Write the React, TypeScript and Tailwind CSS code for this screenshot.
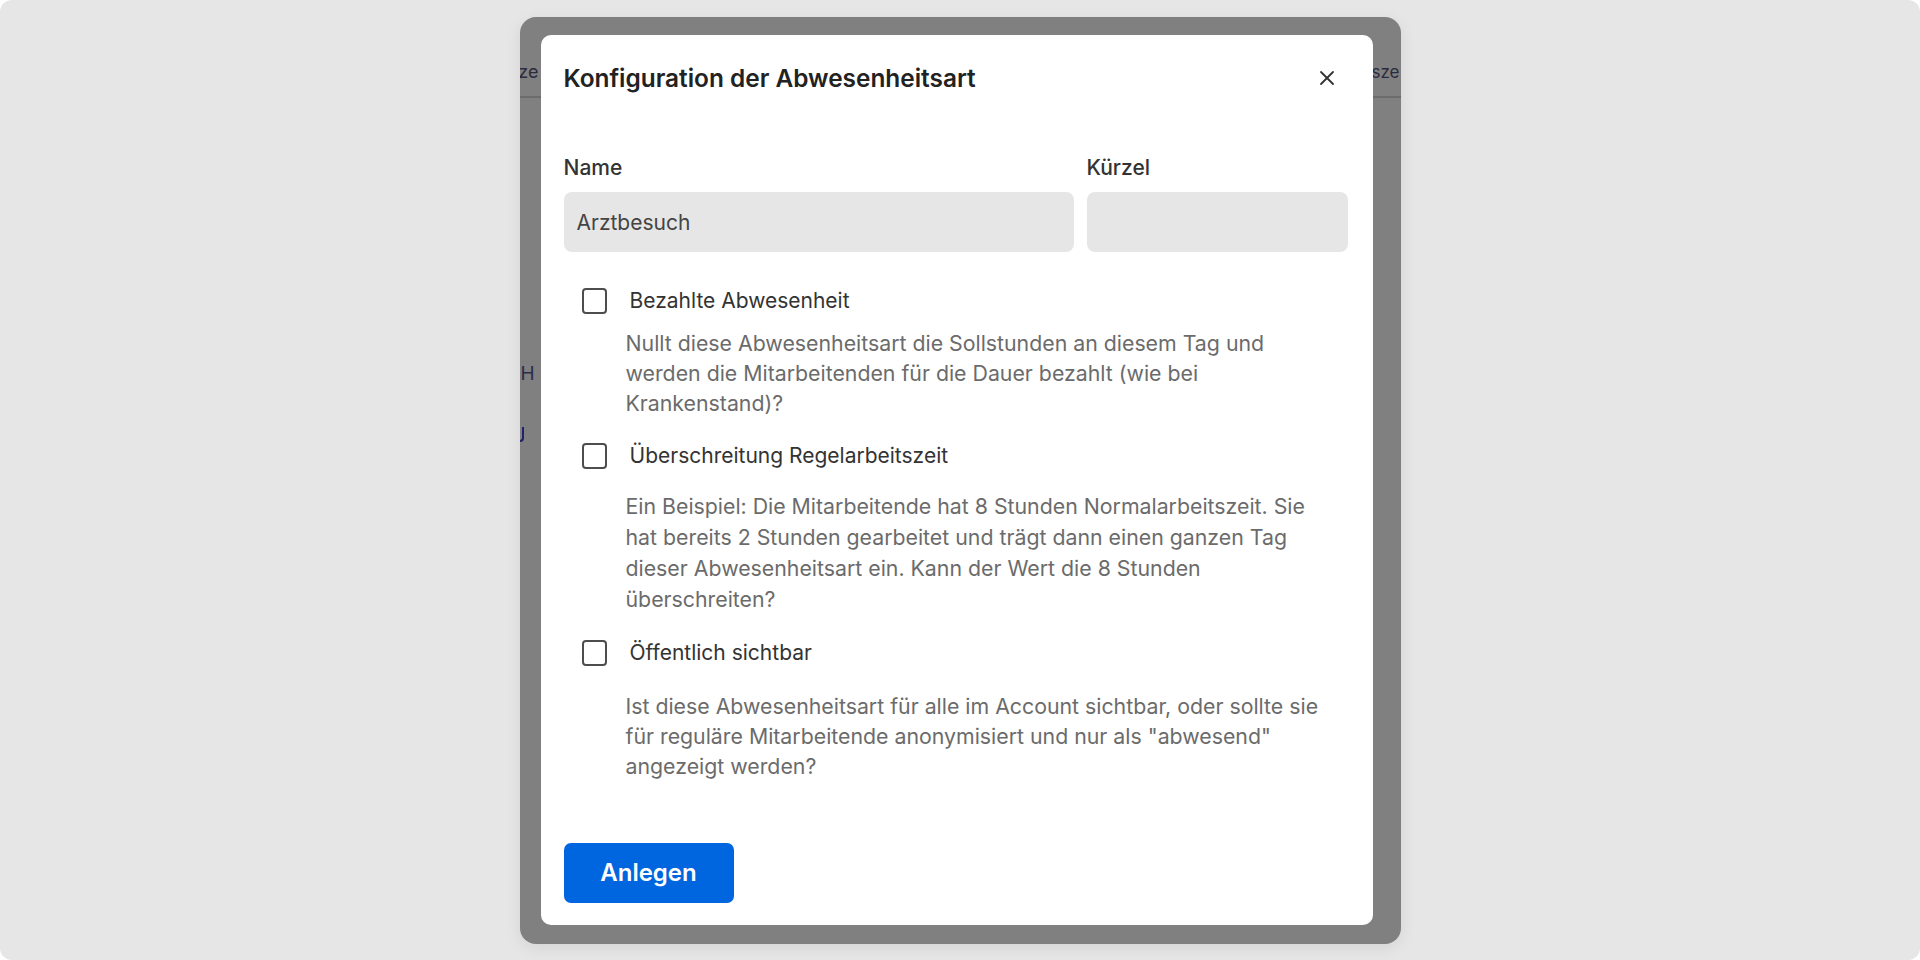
import { X } from "lucide-react"

const options = [
  {
    label: "Bezahlte Abwesenheit",
    text: "Nullt diese Abwesenheitsart die Sollstunden an diesem Tag und werden die Mitarbeitenden für die Dauer bezahlt (wie bei Krankenstand)?",
    rowGap: "mt-[34px]",
    textGap: "mt-[12px]",
    leading: "leading-[30px]",
  },
  {
    label: "Überschreitung Regelarbeitszeit",
    text: "Ein Beispiel: Die Mitarbeitende hat 8 Stunden Normalarbeitszeit. Sie hat bereits 2 Stunden gearbeitet und trägt dann einen ganzen Tag dieser Abwesenheitsart ein. Kann der Wert die 8 Stunden überschreiten?",
    rowGap: "mt-[23px]",
    textGap: "mt-[20px]",
    leading: "leading-[31px]",
  },
  {
    label: "Öffentlich sichtbar",
    text: 'Ist diese Abwesenheitsart für alle im Account sichtbar, oder sollte sie für reguläre Mitarbeitende anonymisiert und nur als "abwesend" angezeigt werden?',
    rowGap: "mt-[23px]",
    textGap: "mt-[23px]",
    leading: "leading-[30px]",
  },
]

function Option({ label, text, rowGap, textGap, leading }: (typeof options)[number]) {
  return (
    <div>
      <label className={`${rowGap} flex h-[30px] items-center gap-[23px] pl-[18px]`}>
        <input type="checkbox" className="h-[26px] w-[25px] shrink-0 appearance-none rounded-[4px] border-[2.5px] border-[#4d4d4d] bg-white" />
        <span className="text-[21px] text-[#333333]">{label}</span>
      </label>
      <p className={`${textGap} ${leading} box-content w-[708px] pl-[62px] text-[21.3px] text-[#6b6b6b]`}>{text}</p>
    </div>
  )
}

export default function App() {
  return (
    <div className="h-[960px] w-full bg-white font-[Inter,sans-serif]">
      <div className="flex h-full w-full justify-center rounded-[12px] bg-[#e6e6e6] pt-[17px]">
        <div className="relative h-[927px] w-[881px] overflow-hidden rounded-[16px] bg-[#808080] pl-[21px] pt-[18px] shadow-[0_4px_16px_rgba(0,0,0,0.08)]">
          {/* page behind the overlay */}
          <span className="absolute right-[862px] top-[41px] text-[18px] leading-[28px] text-[#2b2b3d]">ze</span>
          <span className="absolute right-[1px] top-[41px] text-[17px] leading-[28px] text-[#2b2b3d]">sze</span>
          <div className="absolute left-0 right-0 top-[79px] h-[2px] bg-[#6c6c6c]" />
          <span className="absolute left-[1px] top-[343px] text-[19px] leading-[28px] text-[#2b2b4a]">H</span>
          <div className="absolute left-0 top-[410px] h-[15px] w-[4px] rounded-br-[4px] border-b-2 border-r-2 border-[#22226a]" />

          <div className="relative flex h-[890px] w-[832px] flex-col rounded-[10px] bg-white px-[23px] pt-[28px]">
            <div className="flex h-[30px] items-center justify-between">
              <h2 className="text-[24.4px] font-semibold text-[#222222]">Konfiguration der Abwesenheitsart</h2>
              <button type="button" className="mr-[11px] text-[#333333]">
                <X size={24} strokeWidth={1.8} />
              </button>
            </div>

            <div className="mt-[63px] grid grid-cols-[510px_261px] gap-x-[13px]">
              <span className="h-[24px] text-[21px] font-medium leading-[24px] text-[#333333]">Name</span>
              <span className="h-[24px] text-[21px] font-medium leading-[24px] text-[#333333]">Kürzel</span>
              <input defaultValue="Arztbesuch" className="mt-[12px] h-[60px] rounded-[8px] bg-[#e6e6e6] px-[13px] text-[21px] text-[#444444] outline-none" />
              <input className="mt-[12px] h-[60px] rounded-[8px] bg-[#e6e6e6] px-[13px] text-[21px] text-[#444444] outline-none" />
            </div>

            {options.map((o) => (
              <Option key={o.label} {...o} />
            ))}

            <button type="button" className="mt-[62px] h-[60px] w-[170px] rounded-[7px] bg-[#0066e0] text-[24px] font-semibold text-white">
              Anlegen
            </button>
          </div>
        </div>
      </div>
    </div>
  )
}
